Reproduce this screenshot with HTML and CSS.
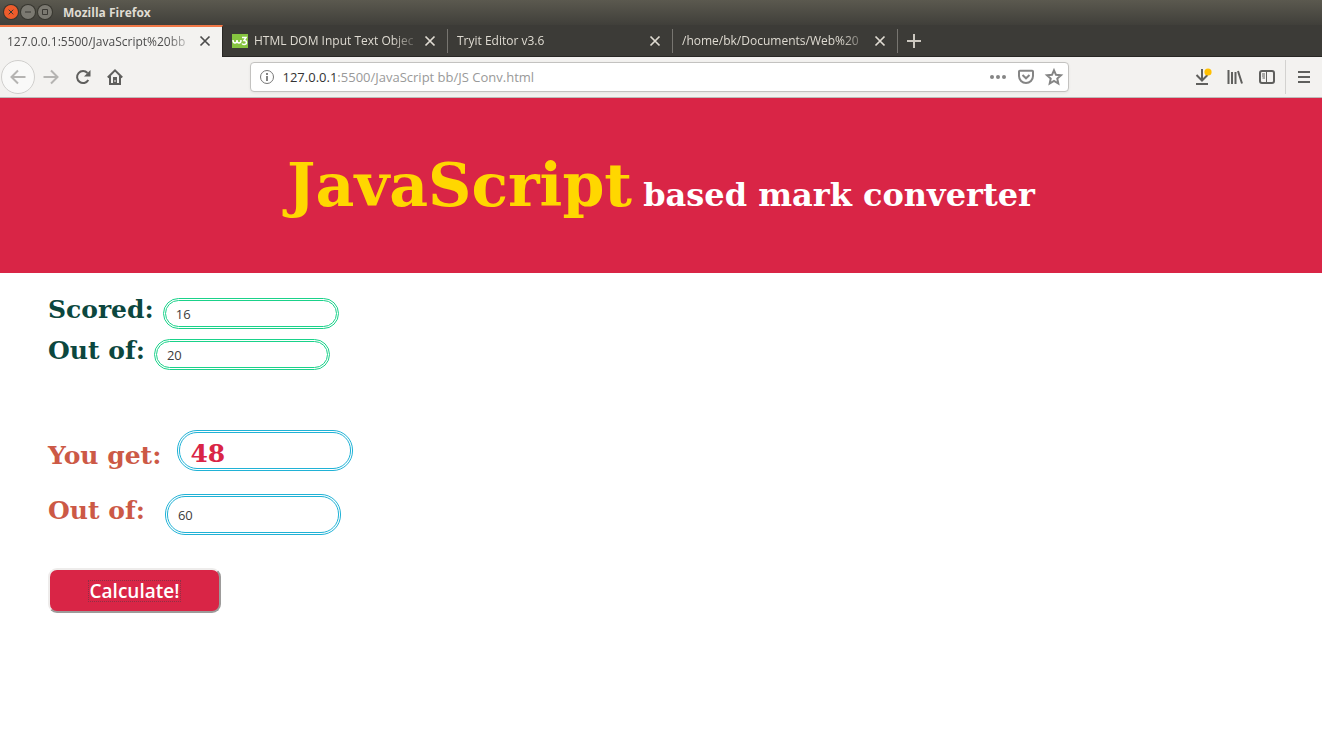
FILE: index.html
```html
<!DOCTYPE html>
<html lang="en">
<head>
<meta charset="utf-8">
<title>Mozilla Firefox</title>
<link rel="stylesheet" href="styles.css">
</head>
<body>
<div class="titlebar">
  <button class="win win-close" aria-label="Close window"><svg viewBox="0 0 14 14"><path d="M4.700 4.700l4.600 4.600M9.300 4.700L4.700 9.300"/></svg></button>
  <button class="win" aria-label="Minimize"><svg viewBox="0 0 14 14"><path d="M4 7h6"/></svg></button>
  <button class="win" aria-label="Maximize"><svg viewBox="0 0 14 14"><path d="M4.500 4.500h5v5h-5z"/></svg></button>
  <span class="window-title">Mozilla Firefox</span>
</div>
<nav class="tabs" aria-label="Tabs">
  <div class="tab tab-active">
    <span class="tab-label">127.0.0.1:5500/JavaScript%20bb</span>
    <button class="tab-close" aria-label="Close tab"><svg viewBox="0 0 12 12"><path d="M1.500 1.500l9 9M10.500 1.500l-9 9"/></svg></button>
  </div>
  <div class="tab">
    <svg class="favicon" viewBox="0 0 16 14"><path fill="#86c440" d="M0 0h16v14H0z"/><path d="M1 6q0 3 2 3t2-3q0 3 2 3t2-3M10 3.500h4l-2 3q2.500 0 2.500 2t-2.500 2q-1.500 0-2-1" fill="none" stroke="#fff" stroke-width="1.500"/></svg>
    <span class="tab-label">HTML DOM Input Text Objec</span>
    <button class="tab-close" aria-label="Close tab"><svg viewBox="0 0 12 12"><path d="M1.500 1.500l9 9M10.500 1.500l-9 9"/></svg></button>
  </div>
  <div class="tab">
    <span class="tab-label">Tryit Editor v3.6</span>
    <button class="tab-close" aria-label="Close tab"><svg viewBox="0 0 12 12"><path d="M1.500 1.500l9 9M10.500 1.500l-9 9"/></svg></button>
  </div>
  <div class="tab">
    <span class="tab-label">/home/bk/Documents/Web%20</span>
    <button class="tab-close" aria-label="Close tab"><svg viewBox="0 0 12 12"><path d="M1.500 1.500l9 9M10.500 1.500l-9 9"/></svg></button>
  </div>
  <button class="new-tab" aria-label="New tab"><svg viewBox="0 0 14 14"><path d="M7 0v14M0 7h14"/></svg></button>
</nav>
<div class="toolbar">
  <button class="tool back" aria-label="Back"><svg class="icon" viewBox="0 0 16 16"><path d="M15.500 8H1.500M8 1.500L1.500 8 8 14.500"/></svg></button>
  <button class="tool forward" aria-label="Forward"><svg class="icon" viewBox="0 0 16 16"><path d="M.5 8h14M8 1.500L14.500 8 8 14.500"/></svg></button>
  <button class="tool" aria-label="Reload"><svg class="icon" viewBox="0 0 16 16"><path d="M13.300 11A6 6 0 1 1 12.500 4"/><path class="solid" d="M15.500 1v6.500H9z"/></svg></button>
  <button class="tool" aria-label="Home"><svg class="icon" viewBox="0 0 16 16"><path d="M.8 8.500L8 1.300l7.200 7.200M3 7v8h10V7"/><path class="solid" d="M6 8h4v7H6z"/><path class="door" d="M8 11v2"/></svg></button>
  <div class="spacer"></div>
  <div class="urlbar">
    <svg class="icon info" viewBox="0 0 16 16"><circle cx="8" cy="8" r="6.500"/><path d="M8 7v5M8 4v2" stroke-width="1.800"/></svg>
    <div class="url" role="textbox" aria-label="Address" tabindex="0"><span class="host">127.0.0.1</span>:5500/JavaScript bb/JS Conv.html</div>
    <button class="tool url-tool" aria-label="Page actions"><svg class="icon" viewBox="0 0 16 16"><g class="solid"><circle cx="2" cy="8" r="2"/><circle cx="8" cy="8" r="2"/><circle cx="14" cy="8" r="2"/></g></svg></button>
    <button class="tool url-tool" aria-label="Save to Pocket"><svg class="icon" viewBox="0 0 16 16"><path d="M1.800 1.800h12.400q.8 0 .8.8V7a7 7 0 0 1-14 0V2.600q0-.8.8-.8zM4.500 6L8 9.300 11.500 6"/></svg></button>
    <button class="tool url-tool" aria-label="Bookmark"><svg class="icon" viewBox="0 0 16 16"><path d="M8 1.300l2 4.500 5 .5-3.700 3.300 1 4.900L8 12l-4.300 2.500 1-4.900L1 6.300l5-.5z"/></svg></button>
  </div>
  <div class="spacer"></div>
  <button class="tool" aria-label="Downloads"><svg class="icon download" viewBox="0 0 16 16"><path d="M7 0v11M1.500 6L7 11.500 12.500 6M1 15h12"/><circle cx="13" cy="3" r="3.600" fill="#ffbf00" stroke="none"/></svg></button>
  <button class="tool" aria-label="Library"><svg class="icon" viewBox="0 0 16 16"><path d="M1.500 1v14M5 3v12M8.500 3v12M11 2l4 12.500"/></svg></button>
  <button class="tool" aria-label="Sidebars"><svg class="icon" viewBox="0 0 16 16"><rect x="1" y="2" width="14" height="12" rx="2"/><path d="M7.500 2v12M3 5h3M3 7h3M3.500 9H6" stroke-width="1"/></svg></button>
  <button class="tool menu" aria-label="Menu"><svg class="icon" viewBox="0 0 16 16"><path d="M2 3h12M2 8h12M2 13h12"/></svg></button>
</div>
<header class="banner">
  <h1><span class="highlight">JavaScript</span> based mark converter</h1>
</header>
<main class="converter">
  <div class="field">
    <label for="scored">Scored:</label>
    <input id="scored" type="text" value="16">
  </div>
  <div class="field">
    <label for="total">Out of:</label>
    <input id="total" type="text" value="20">
  </div>
  <div class="field result you-get">
    <label for="result">You get:</label>
    <input id="result" class="score" type="text" value="48">
  </div>
  <div class="field result new-total">
    <label for="target">Out of:</label>
    <input id="target" type="text" value="60">
  </div>
  <button class="calculate"><span>Calculate!</span></button>
</main>
</body>
</html>
```
FILE: styles.css
```css
* { box-sizing: border-box; }
body {
  margin: 0;
  background: #fff;
  font-family: "Open Sans", "Noto Sans", sans-serif;
  font-size: 12px;
}
button {
  margin: 0;
  padding: 0;
  border: 0;
  background: none;
  font-family: inherit;
}
svg { display: block; flex: none; }

.titlebar {
  display: flex;
  align-items: center;
  gap: 3px;
  height: 25px;
  padding: 0 4px 1px;
  background: linear-gradient(#5b594f, #403f3a);
  color: #dfdbd2;
}
.win {
  width: 14px;
  height: 14px;
  border-radius: 50%;
  background: #7b7971;
  box-shadow: 0 0 0 1px #37362f;
}
.win-close { background: #ee5c2c; }
.win svg { fill: none; stroke: #3b3934; stroke-width: 1; }
.window-title { margin-left: 8px; font-weight: 700; }

.tabs {
  display: flex;
  height: 32px;
  background: #3c3b37;
  border-bottom: 1px solid #282724;
}
.tab {
  display: flex;
  align-items: center;
  flex: 0 1 225px;
  min-width: 0;
  padding: 0 12px 0 9px;
  color: #dfdbd2;
  background: linear-gradient(#777570, #777570) right center / 1px 24px no-repeat;
}
.tab-active {
  flex-basis: 223px;
  height: 32px;
  padding: 0 11px 2px 7px;
  background: #f3f2f0;
  color: #4c4c4c;
  border-top: 2px solid #f07746;
  border-right: 1px solid #282724;
}
.favicon { width: 16px; height: 14px; margin-right: 6px; }
.tab-label {
  flex: 1;
  min-width: 0;
  margin-right: 4px;
  overflow: hidden;
  white-space: nowrap;
  -webkit-mask-image: linear-gradient(to left, transparent, #000 28px);
  mask-image: linear-gradient(to left, transparent, #000 28px);
}
.tab-close svg { width: 12px; height: 12px; }
.tab-close svg, .new-tab svg { fill: none; stroke: currentColor; stroke-width: 1.7; }
.tab-close { color: inherit; }
.new-tab { padding: 0 9px; color: #ccc8c0; }
.new-tab svg { width: 14px; height: 14px; stroke-width: 2; }

.toolbar {
  display: flex;
  align-items: center;
  height: 41px;
  padding-left: 1px;
  background: #f3f2f0;
  border-bottom: 1px solid #bdbcba;
}
.tool {
  display: flex;
  align-items: center;
  justify-content: center;
  flex: none;
  width: 32px;
  height: 34px;
  color: #5f5f5d;
}
.icon {
  width: 16px;
  height: 16px;
  overflow: visible;
  fill: none;
  stroke: currentColor;
  stroke-width: 2;
}
.solid { fill: currentColor; stroke: none; }
.door { stroke: #f3f2f0; stroke-width: 1; }
.back {
  width: 34px;
  border: 1px solid #d0cfcd;
  border-radius: 50%;
  background: #f9f9f8;
  color: #b5b4b2;
}
.forward { color: #b5b4b2; }
.spacer { flex: 1; }
.urlbar {
  display: flex;
  align-items: center;
  width: 62%;
  height: 30px;
  padding: 0 0 0 8px;
  background: #fff;
  border: 1px solid #c3c2c0;
  border-radius: 4px;
  box-shadow: 0 1px 3px #0000000f;
  color: #999;
}
.info { stroke-width: 1; color: #777; }
.url { flex: 1; padding-left: 8px; font-size: 13px; white-space: nowrap; }
.host { color: #333; }
.url-tool { width: 28px; color: #858585; }
.menu { width: 37px; border-left: 1px solid #d3d2d0; margin-left: 2px; }

.banner {
  padding: 52px 16px 42px;
  background: #d92546;
  color: #fff;
  text-align: center;
}
.banner h1 {
  margin: 0;
  font: 700 32px/71px "DejaVu Serif", serif;
}
.highlight { color: #ffd700; font-size: 60px; }

.converter { padding: 25px 48px; }
.field {
  display: flex;
  align-items: flex-start;
  margin-bottom: 10px;
}
.field label {
  color: #0c473e;
  font: 700 25px/24px "DejaVu Serif", serif;
}
.field input {
  width: 176px;
  height: 31px;
  margin: 0 0 0 9px;
  padding: 0 10px;
  border: 3px double #1ad28a;
  border-radius: 20px;
  background: #fff;
  color: #3c3c3c;
  font: 13px "Open Sans", sans-serif;
}
.result label { color: #cc5946; }
.result input { height: 41px; border-color: #20b2d6; }
.you-get { margin: 60px 0 23px; height: 41px; }
.you-get label { line-height: 52px; }
.new-total { margin-bottom: 33px; }
.new-total label { line-height: 34px; }
.you-get input { margin-left: 16px; }
.new-total input { margin-left: 20px; }
.result .score {
  padding-top: 5px;
  color: #d92546;
  font: 700 25px "DejaVu Serif", serif;
}
.calculate {
  width: 173px;
  height: 45px;
  border: 2px solid;
  border-color: #eeeceb #9d9b9a #9d9b9a #eeeceb;
  border-radius: 9px;
  background: #d92546;
  color: #fff;
  font-size: 19px;
  font-weight: 600;
}
.calculate span {
  display: inline-block;
  padding: 0 1px;
  border: 1px dotted #8f3045;
  line-height: 20px;
}
```
